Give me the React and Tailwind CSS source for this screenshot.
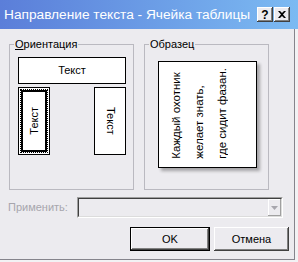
import React from 'react';

const font = "font-['Liberation_Sans',Arial,sans-serif]";

function TitleButton({ children }) {
    return (
        <div className="w-[16px] h-[15px] bg-[#ecebef] flex items-center justify-center shadow-[inset_-1px_-1px_0_#404040,inset_1px_1px_0_#fff,inset_-2px_-2px_0_#808080]">
            {children}
        </div>
    );
}

function Group({ label, className, children }) {
    return (
        <div className={`relative w-[125px] h-[146px] border border-[#bab9c0] ${className}`}>
            <span className="absolute -top-[8px] left-[4px] px-[1px] bg-[#ecebef] text-[11px] leading-[14px] text-black">
                {label}
            </span>
            {children}
        </div>
    );
}

export default function App() {
    return (
        <div className={`w-[298px] h-[262px] overflow-hidden bg-[#f2f2f4] flex flex-col ${font}`}>
            <div className="h-[29px] w-[298px] shrink-0 bg-gradient-to-r from-[#5b7ed9] to-[#7cbaf2] flex items-center pl-[4px] pr-[8px]">
                <span className="text-white text-[13.7px] leading-[16px] flex-1 pt-[1px]">Направление текста - Ячейка таблицы</span>
                <div className="flex gap-[1px]">
                    <TitleButton>
                        <span className="text-[12px] font-bold leading-none text-black">?</span>
                    </TitleButton>
                    <TitleButton>
                        <svg width="8" height="7" viewBox="0 0 8 7">
                            <path d="M0 0h2l2 2 2-2h2L5 3.5 8 7H6L4 5 2 7H0l3-3.5z" fill="#000" />
                        </svg>
                    </TitleButton>
                </div>
            </div>

            <div className="w-[295px] h-[231px] shrink-0 bg-[#ecebef] border-r border-b border-[#85848c] flex flex-col">
                <div className="mt-[15px] ml-[9px] flex gap-[10px]">
                    <Group label={<><span className="underline">О</span>риентация</>} className="pt-[12px] pl-[8px]">
                        <div className="w-[108px] h-[27px] border border-black bg-white flex items-center justify-center text-[11px]">
                            Текст
                        </div>
                        <div className="mt-[3px] w-[108px] flex justify-between">
                            <div className="w-[32px] h-[68px] border border-black bg-white p-[1px]">
                                <div className="w-full h-full border border-dotted border-black">
                                    <div className="w-full h-full border-2 border-black bg-white flex items-center justify-center">
                                        <span className="[writing-mode:vertical-rl] rotate-180 text-[11px] leading-[13px]">Текст</span>
                                    </div>
                                </div>
                            </div>
                            <div className="w-[32px] h-[68px] border border-black bg-white flex items-center justify-center">
                                <span className="[writing-mode:vertical-rl] text-[11px] leading-[13px]">Текст</span>
                            </div>
                        </div>
                    </Group>
                    <Group label="Образец" className="pt-[16px] pl-[13px]">
                        <div className="w-[99px] h-[107px] border border-black bg-white shadow-[3px_3px_3px_rgba(0,0,0,0.3)] flex items-end pl-[6px] pb-[8px]">
                            <p className="[writing-mode:vertical-rl] rotate-180 text-[11.5px] leading-[23px] text-black">
                                Каждый охотник<br />желает знать,<br />где сидит фазан.
                            </p>
                        </div>
                    </Group>
                </div>

                <div className="mt-[7px] flex items-center pl-[8px]">
                    <span className="w-[69px] text-[11px] text-[#a7a6ad]">Применить:</span>
                    <div className="w-[206px] h-[21px] border border-t-[#a0a0a0] border-l-[#a0a0a0] border-r-white border-b-white">
                        <div className="w-full h-full border border-t-[#404040] border-l-[#404040] border-r-[#dcdcdc] border-b-[#dcdcdc] flex justify-end">
                            <div className="w-[13px] h-full bg-[#ecebef] flex items-center justify-center shadow-[inset_-1px_-1px_0_#a0a0a0,inset_1px_1px_0_#fff]">
                                <svg width="7" height="4" viewBox="0 0 7 4">
                                    <path d="M0 0h7L3.5 4z" fill="#a7a6ad" />
                                </svg>
                            </div>
                        </div>
                    </div>
                </div>

                <div className="mt-[9px] ml-[130px] flex gap-[4px] text-[11px]">
                    <div className="w-[80px] h-[24px] border border-black">
                        <div className="w-full h-full flex items-center justify-center shadow-[inset_-1px_-1px_0_#404040,inset_1px_1px_0_#fff,inset_-2px_-2px_0_#808080]">
                            OK
                        </div>
                    </div>
                    <div className="w-[75px] h-[24px] flex items-center justify-center shadow-[inset_-1px_-1px_0_#404040,inset_1px_1px_0_#fff,inset_-2px_-2px_0_#808080]">
                        Отмена
                    </div>
                </div>
            </div>
        </div>
    );
}
